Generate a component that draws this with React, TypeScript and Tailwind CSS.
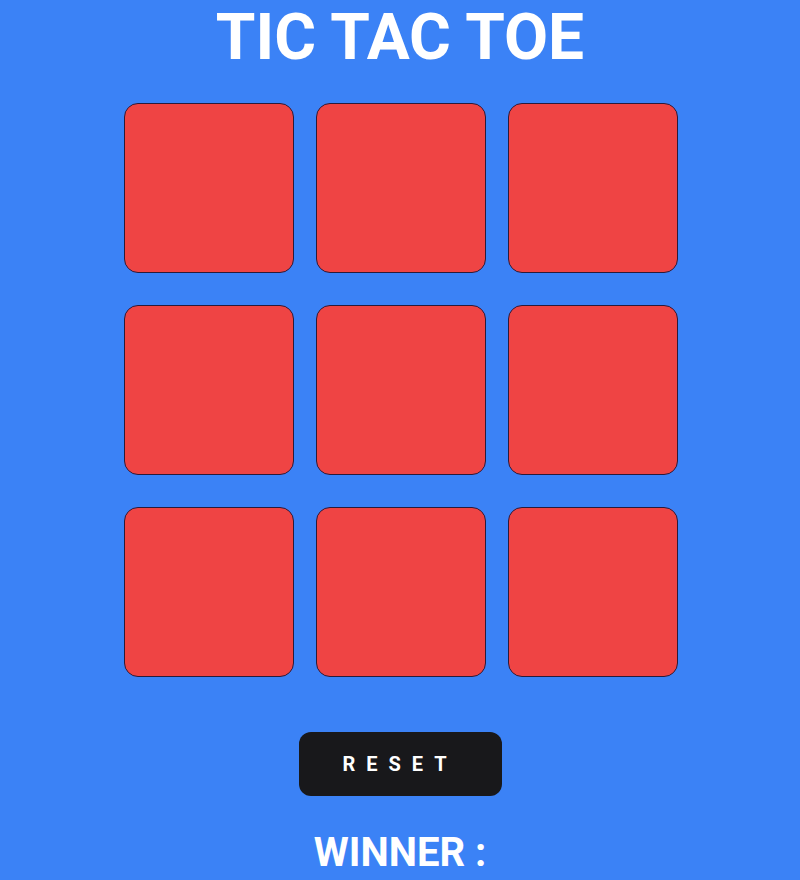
import React from "react";

export default function App() {
  const cells = Array.from({ length: 9 });
  return (
    <div
      className="min-h-screen w-full bg-[#3b82f6] flex flex-col items-center"
      style={{ fontFamily: "Roboto, 'Liberation Sans', sans-serif" }}
    >
      <h1 className="text-white font-bold text-[64px] leading-none mt-[6px]">TIC TAC TOE</h1>
      <div className="grid grid-cols-[170px_170px_170px] gap-x-[22px] gap-y-[32px] mt-[33px] ml-[1px]">
        {cells.map((_, i) => (
          <div
            key={i}
            className="w-[170px] h-[170px] bg-[#ef4444] border border-[#2b1b3b] rounded-[14px]"
          />
        ))}
      </div>
      <button className="mt-[55px] w-[203px] h-[64px] bg-[#18181b] rounded-[12px] text-white font-bold text-xl tracking-[0.55em]">
        RESET
      </button>
      <div className="text-white font-bold text-[40px] leading-none mt-[37px]">WINNER :</div>
    </div>
  );
}
